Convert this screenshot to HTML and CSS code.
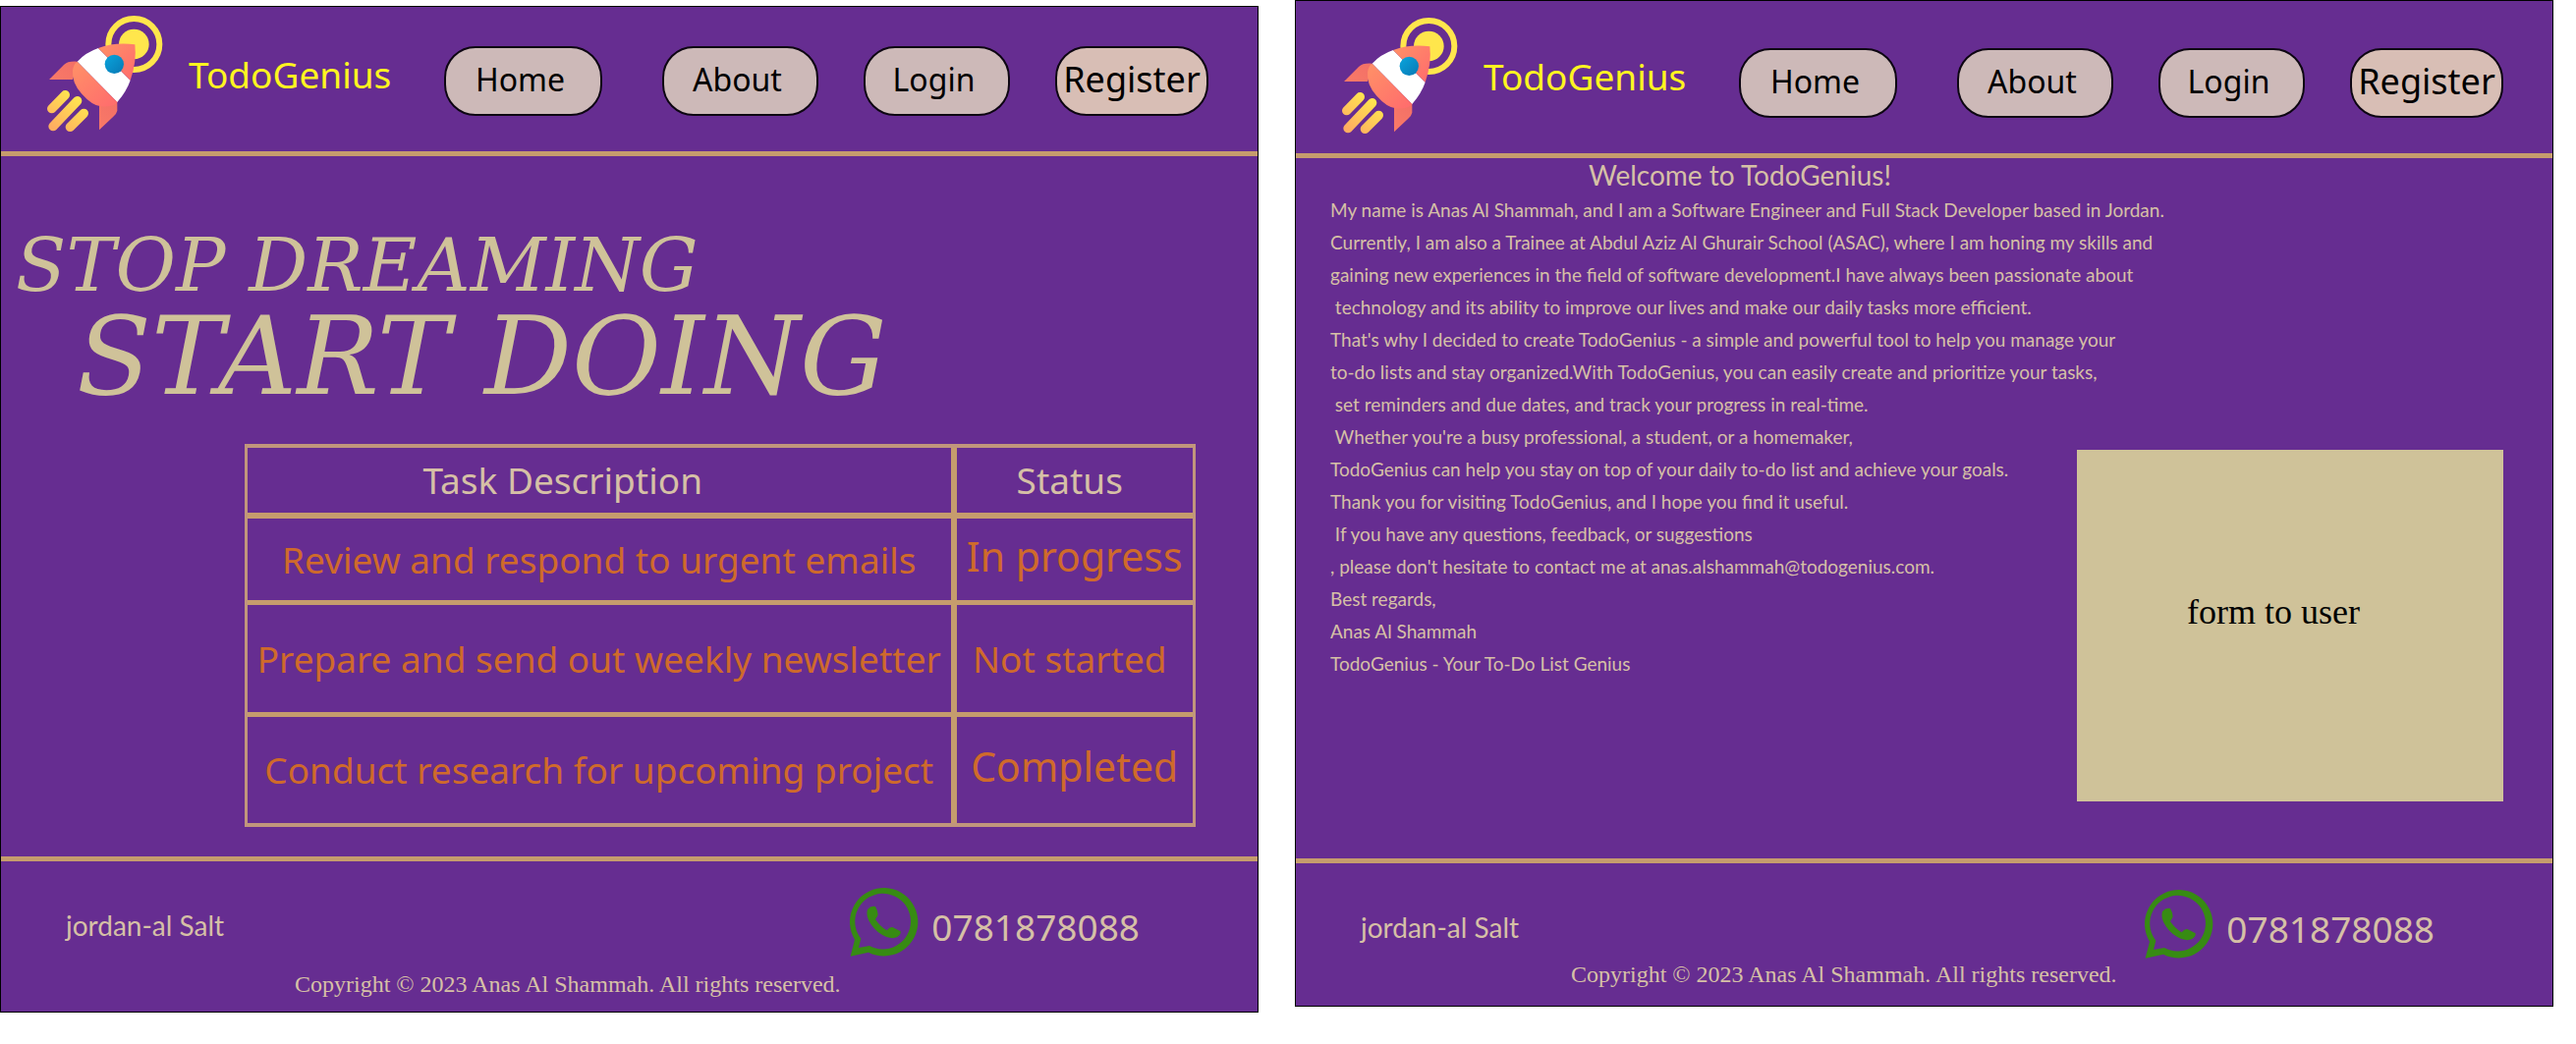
FILE: index.html
```html
<!DOCTYPE html>
<html lang="en">
<head>
<meta charset="utf-8">
<title>TodoGenius</title>
<link rel="stylesheet" href="styles.css">
</head>
<body>
<svg class="sprite" aria-hidden="true">
  <defs>
    <linearGradient id="coral" x1="0" y1="0" x2="1" y2="1"><stop offset="0" stop-color="#ff9167"/><stop offset="1" stop-color="#ff6b6d"/></linearGradient>
    <linearGradient id="fin" x1="0" y1="1" x2="1" y2="0"><stop offset="0" stop-color="#ff8568"/><stop offset="1" stop-color="#ee6766"/></linearGradient>
    <linearGradient id="glass" x1="0" y1="0" x2="1" y2="1"><stop offset="0" stop-color="#0aa5dd"/><stop offset="1" stop-color="#0878b4"/></linearGradient>
    <linearGradient id="flame" gradientUnits="userSpaceOnUse" x1="150" y1="300" x2="80" y2="395"><stop offset="0" stop-color="#ffe54f"/><stop offset="1" stop-color="#ffad61"/></linearGradient>
    <symbol id="rocket" viewBox="54 48 354 354">
      <circle cx="319" cy="135" r="78" fill="none" stroke="#ffe64c" stroke-width="18"/>
      <circle cx="319" cy="135" r="46" fill="#ffe64c"/>
      <path fill="url(#fin)" d="M146 188Q117 186 105 198L60 243H132ZM268 308V338Q266 348 256 356L213 397V318Z"/>
      <path fill="#fff" d="M210 147L308 245Q297 278 268 312L146 188Q172 160 210 147Z"/>
      <path fill="url(#coral)" d="M210 147Q262 128 322 136Q328 190 308 245Z"/>
      <path fill="url(#coral)" d="M146 188L268 312Q256 328 218 325Q190 321 160 287Q129 254 132 216Q134 196 146 188Z"/>
      <circle cx="259" cy="196" r="29" fill="url(#glass)"/>
      <path fill="none" stroke="url(#flame)" stroke-width="28" stroke-linecap="round" d="M68 332L109 290M72 386L146 308M124 388L166 346"/>
    </symbol>
    <symbol id="whatsapp" viewBox="43 40 210 210">
      <path fill="#378b13" fill-rule="evenodd" d="M45 249L58 198A104 104 0 1 1 100 237ZM70 223L103 217A85 85 0 1 0 77 195Z"/>
      <path fill="#378b13" d="M97 106Q108 93 121 97Q127 106 129 122Q128 128 121 136Q135 158 156 170Q165 159 173 160L198 173Q200 182 188 190Q175 197 155 190Q125 178 108 152Q90 126 97 106Z"/>
    </symbol>
  </defs>
</svg>

<div class="board">
  <section class="panel panel-home">
    <header class="header">
      <svg class="logo" role="img" aria-label="Rocket"><use href="#rocket"/></svg>
      <span class="brand">TodoGenius</span>
      <nav class="nav">
        <a class="pill" href="#">Home</a>
        <a class="pill" href="#">About</a>
        <a class="pill" href="#">Login</a>
        <a class="pill pill-register" href="#">Register</a>
      </nav>
    </header>
    <main class="main">
      <h1 class="slogan">
        <span class="slogan-top">STOP DREAMING</span>
        <span class="slogan-bottom">START DOING</span>
      </h1>
      <table class="tasks">
        <thead>
          <tr><th class="task-head">Task Description</th><th class="status-head">Status</th></tr>
        </thead>
        <tbody>
          <tr class="row-short"><td>Review and respond to urgent emails</td><td class="large">In progress</td></tr>
          <tr class="row-tall"><td>Prepare and send out weekly newsletter</td><td class="status">Not started</td></tr>
          <tr class="row-last"><td>Conduct research for upcoming project</td><td class="large">Completed</td></tr>
        </tbody>
      </table>
    </main>
    <footer class="footer">
      <div class="contact">
        <span class="place">jordan-al Salt</span>
        <a class="phone" href="tel:0781878088"><svg class="whatsapp" aria-hidden="true"><use href="#whatsapp"/></svg><span class="number">0781878088</span></a>
      </div>
      <p class="copyright">Copyright © 2023 Anas Al Shammah. All rights reserved.</p>
    </footer>
  </section>

  <section class="panel panel-about">
    <header class="header">
      <svg class="logo" role="img" aria-label="Rocket"><use href="#rocket"/></svg>
      <span class="brand">TodoGenius</span>
      <nav class="nav">
        <a class="pill" href="#">Home</a>
        <a class="pill" href="#">About</a>
        <a class="pill" href="#">Login</a>
        <a class="pill pill-register" href="#">Register</a>
      </nav>
    </header>
    <main class="main about">
      <div class="story">
        <h2 class="welcome">Welcome to TodoGenius!</h2>
        <p class="letter">My name is Anas Al Shammah, and I am a Software Engineer and Full Stack Developer based in Jordan.
Currently, I am also a Trainee at Abdul Aziz Al Ghurair School (ASAC), where I am honing my skills and
gaining new experiences in the field of software development.I have always been passionate about
 technology and its ability to improve our lives and make our daily tasks more efficient.
That's why I decided to create TodoGenius - a simple and powerful tool to help you manage your
to-do lists and stay organized.With TodoGenius, you can easily create and prioritize your tasks,
 set reminders and due dates, and track your progress in real-time.
 Whether you're a busy professional, a student, or a homemaker,
TodoGenius can help you stay on top of your daily to-do list and achieve your goals.
Thank you for visiting TodoGenius, and I hope you find it useful.
 If you have any questions, feedback, or suggestions
, please don't hesitate to contact me at anas.alshammah@todogenius.com.
Best regards,
Anas Al Shammah
TodoGenius - Your To-Do List Genius</p>
      </div>
      <div class="form-area">form to user</div>
    </main>
    <footer class="footer">
      <div class="contact">
        <span class="place">jordan-al Salt</span>
        <a class="phone" href="tel:0781878088"><svg class="whatsapp" aria-hidden="true"><use href="#whatsapp"/></svg><span class="number">0781878088</span></a>
      </div>
      <p class="copyright">Copyright © 2023 Anas Al Shammah. All rights reserved.</p>
    </footer>
  </section>
</div>
</body>
</html>
```
FILE: styles.css
```css
* {
  box-sizing: border-box;
}

body {
  margin: 0;
  background: #fff;
  color: #d6c0a6;
  font-family: "Noto Sans", "Open Sans", sans-serif;
  font-size: 36px;
}

.sprite {
  position: absolute;
  width: 0;
  height: 0;
}

.board {
  display: grid;
  grid-template-columns: 1fr 1fr;
  align-items: start;
  gap: 37px;
  padding-right: 23px;
}

.panel {
  border: 1px solid #000;
  background: #662d91;
}

.panel-home {
  margin-top: 6px;
}

/* header */
.header {
  display: grid;
  grid-template-columns: 118px 1fr auto;
  column-gap: 26px;
  align-items: center;
  padding: 9px 50px 20px 47px;
  border-bottom: 5px solid #c69c6d;
}

.panel-about .header {
  padding-top: 17px;
}

.logo {
  display: block;
  width: 118px;
  height: 118px;
}

.brand {
  color: #fff51f;
  font-size: 37px;
}

.nav {
  display: grid;
  grid-template-columns: 176px 159px 149px 156px;
  column-gap: 46px;
  padding-top: 14px;
}

.pill {
  display: flex;
  align-items: center;
  justify-content: center;
  height: 71px;
  padding: 0 6px 4px 0;
  border: 2px solid #0d0612;
  border-radius: 32px;
  background: #cdb9b8;
  color: #000;
  font-size: 32px;
  text-decoration: none;
}

.pill:first-child {
  margin-right: 15px;
}

.pill-register {
  padding-right: 0;
  background: #d8beb5;
  font-size: 36px;
}

/* home */
.main {
  min-height: 713px;
}

.slogan {
  margin: 0;
  padding: 62px 0 45px 15px;
  color: #cfc299;
  font-family: "DejaVu Serif", serif;
  font-style: italic;
  font-weight: 400;
}

.slogan-top,
.slogan-bottom {
  display: block;
}

.slogan-top {
  font-size: 75px;
  line-height: 98px;
}

.slogan-bottom {
  padding-left: 62px;
  font-size: 111px;
  line-height: 88px;
}

.tasks {
  width: calc(100% - 311px);
  margin-left: 248px;
  border: 4px solid #c1967c;
  border-width: 4px 3px;
  border-collapse: separate;
  border-spacing: 0;
  table-layout: fixed;
  font-size: 37px;
  line-height: 48px;
  text-align: center;
}

.tasks th,
.tasks td {
  height: 72px;
  padding: 0;
  border-bottom: 6px solid #c69c6d;
  font-weight: 400;
  white-space: nowrap;
}

.tasks td {
  border-bottom-width: 5px;
  color: #cf6a2b;
}

.tasks th:first-child,
.tasks td:first-child {
  width: 75%;
  border-right: 6px solid #c69c6d;
}

.tasks .task-head {
  padding-right: 74px;
}

.tasks .status-head,
.tasks .status {
  padding-right: 10px;
}

.tasks .row-short td {
  height: 88px;
}

.tasks .row-tall td {
  height: 114px;
}

.tasks .row-last td {
  height: 108px;
  border-bottom: 0;
}

.tasks td.large {
  padding-bottom: 8px;
  font-size: 41px;
}

/* about */
.about {
  display: grid;
  grid-template-columns: 1fr 434px;
  padding-right: 50px;
  font-family: Lato, "Noto Sans", sans-serif;
}

.story {
  grid-area: 1 / 1 / 2 / 3;
  padding-left: 35px;
}

.welcome {
  margin: 0;
  padding-left: 263px;
  font-size: 28px;
  font-weight: 400;
  line-height: 34px;
}

.letter {
  margin: 0;
  padding-top: 2px;
  font-size: 19px;
  line-height: 33px;
  white-space: pre;
}

.form-area {
  display: flex;
  grid-area: 1 / 2;
  align-items: center;
  align-self: end;
  justify-content: center;
  height: 358px;
  margin-bottom: 58px;
  padding: 0 34px 28px 0;
  background: #cfc299;
  color: #000;
  font-family: "Liberation Serif", serif;
}

/* footer */
.footer {
  padding: 27px 120px 12px 66px;
  border-top: 5px solid #c69c6d;
}

.panel-about .footer {
  padding-bottom: 16px;
}

.contact {
  display: flex;
  align-items: center;
  justify-content: space-between;
}

.place {
  padding-top: 6px;
  font-family: Lato, "Noto Sans", sans-serif;
  font-size: 28px;
}

.phone {
  display: flex;
  gap: 13px;
  align-items: center;
  color: inherit;
  font-size: 37px;
  text-decoration: none;
}

.number {
  padding-top: 8px;
}

.whatsapp {
  width: 70px;
  height: 70px;
}

.copyright {
  margin: 12px 0 0;
  padding-left: 233px;
  font-family: "Liberation Serif", serif;
  font-size: 24px;
  line-height: 32px;
}

.panel-about .copyright {
  margin-top: 0;
  padding-left: 214px;
}
```
